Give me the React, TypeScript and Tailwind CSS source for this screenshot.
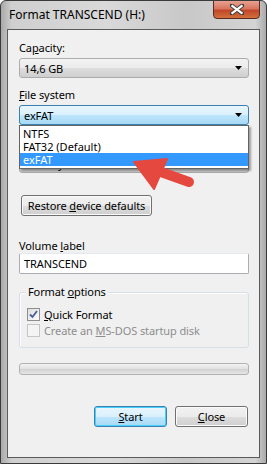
import { ReactNode } from "react";

const font = { fontFamily: '"Segoe UI", "Noto Sans", sans-serif' };
const txt = "text-[11px] leading-[15px] tracking-[-0.1px]";

function Combo(props: { children: ReactNode; focused?: boolean }) {
  return (
    <div
      className={`h-[20px] w-full rounded-[3px] border flex items-center pl-[4px] pr-[6px] ${
        props.focused
          ? "border-[#3c7fb1] bg-[linear-gradient(#eaf6fd_0%,#d9f0fc_50%,#bee6fd_51%,#a7d9f5_100%)]"
          : "border-[#acacac] bg-[linear-gradient(#f2f2f2_0%,#ebebeb_50%,#dddddd_51%,#cfcfcf_100%)]"
      }`}
    >
      <span className={`flex-1 ${txt}`}>{props.children}</span>
      <svg width="7" height="4" viewBox="0 0 7 4">
        <path d="M0 0H7L3.5 4Z" fill="#000" />
      </svg>
    </div>
  );
}

function Btn(props: { children: ReactNode; primary?: boolean; className?: string }) {
  return (
    <div
      className={`h-[21px] rounded-[3px] border flex items-center justify-center ${
        props.primary
          ? "border-[#3c7fb1] shadow-[inset_0_0_0_1px_#48d0fa] bg-[linear-gradient(#eaf6fd_0%,#d9f0fc_50%,#bee6fd_51%,#a7d9f5_100%)]"
          : "border-[#707070] shadow-[inset_0_0_0_1px_#fbfbfb] bg-[linear-gradient(#f2f2f2_0%,#ebebeb_50%,#dddddd_51%,#cfcfcf_100%)]"
      } ${props.className ?? ""}`}
    >
      <span className={txt}>{props.children}</span>
    </div>
  );
}

function Check(props: { checked?: boolean; disabled?: boolean; children: ReactNode }) {
  return (
    <div className="flex items-center gap-[4px] h-[16px]">
      <div
        className={`w-[13px] h-[13px] border flex items-center justify-center ${
          props.disabled
            ? "border-[#c5c5c5] bg-[#f4f4f4]"
            : "border-[#8e8f8f] bg-[linear-gradient(135deg,#dcdcdc,#fdfdfd)]"
        }`}
      >
        {props.checked && (
          <svg width="9" height="9" viewBox="0 0 9 9">
            <path d="M1 4.5L3.5 7L8 1" fill="none" stroke="#4a5f97" strokeWidth="1.8" />
          </svg>
        )}
      </div>
      <span className={`${txt} ${props.disabled ? "text-[#8d8d8d]" : "text-black"}`}>
        {props.children}
      </span>
    </div>
  );
}

export default function App() {
  return (
    <div
      style={font}
      className="relative w-[267px] h-[464px] flex flex-col overflow-hidden rounded-t-[6px] border border-[#3a3a3a] bg-[linear-gradient(90deg,#a9a9a9_0%,#cfcfcf_4%,#d9d9d9_40%,#c8c8c8_70%,#d4d4d4_96%,#a9a9a9_100%)] text-black"
    >
      {/* title bar */}
      <div className="h-[28px] shrink-0 flex items-start pl-[8px] pt-[6px] relative">
        <span className="text-[12px] leading-[15px] text-black">Format TRANSCEND (H:)</span>
        <div className="absolute right-[6px] top-[-1px] w-[47px] h-[19px] rounded-b-[4px] border border-[#5a2a24] bg-[linear-gradient(#e7a291_0%,#d9765e_45%,#c2452a_55%,#d2703b_100%)] flex items-center justify-center">
          <svg width="14" height="11" viewBox="0 0 14 11">
            <path d="M1 1L13 10M13 1L1 10" stroke="#3e3e3e" strokeWidth="4" strokeLinecap="round" />
            <path d="M1.5 1.3L12.5 9.7M12.5 1.3L1.5 9.7" stroke="#fff" strokeWidth="2.2" />
          </svg>
        </div>
      </div>

      {/* client area */}
      <div className="mx-[6px] h-[429px] shrink-0 border border-[#5a5a5a] bg-[#f0f0f0] pl-[11px] pr-[10px] flex flex-col relative">
        <div className={`${txt} mt-[10px]`}>
          Ca<u>p</u>acity:
        </div>
        <div className="mt-[3px]">
          <Combo>14,6 GB</Combo>
        </div>
        <div className={`${txt} mt-[9px]`}>
          <u>F</u>ile system
        </div>
        <div className="mt-[3px]">
          <Combo focused>exFAT</Combo>
        </div>
        <div className={`${txt} mt-[10px]`}>
          <u>A</u>llocation unit size
        </div>
        <div className="mt-[3px]">
          <Combo>4096 bytes</Combo>
        </div>
        <div className="mt-[22px]">
          <Btn className="w-[131px] ml-[2px]">
            Restore <u>d</u>evice defaults
          </Btn>
        </div>
        <div className={`${txt} mt-[22px]`}>
          Volume <u>l</u>abel
        </div>
        <div className={`h-[21px] border border-[#abadb3] border-t-[#e3e9ef] bg-white flex items-center pl-[4px] rounded-[2px] ${txt}`}>
          TRANSCEND
        </div>
        <div className="mt-[18px] h-[56px] border border-[#d5dfe5] rounded-[3px] relative pt-[13px] pl-[7px] flex flex-col shadow-[inset_1px_1px_0_#fff]">
          <span className={`absolute left-[6px] top-[-9px] px-[2px] bg-[#f0f0f0] ${txt}`}>
            Format <u>o</u>ptions
          </span>
          <Check checked>
            <u>Q</u>uick Format
          </Check>
          <Check disabled>
            Create an <u>M</u>S-DOS startup disk
          </Check>
        </div>
        <div className="mt-[15px] h-[12px] rounded-[3px] border border-[#b2b2b2] bg-[linear-gradient(#f3f3f3_0%,#e2e2e2_45%,#d3d3d3_55%,#e6e6e6_100%)]" />
        <div className="mt-[31px] flex justify-end gap-[8px] pr-[1px]">
          <Btn primary className="w-[73px]">
            <u>S</u>tart
          </Btn>
          <Btn className="w-[73px]">
            <u>C</u>lose
          </Btn>
        </div>

        {/* open dropdown list */}
        <div className="absolute left-[11px] top-[95px] w-[230px] h-[44px] border border-[#646464] bg-white shadow-[2px_2px_2px_rgba(0,0,0,0.35)] flex flex-col pt-[1px]">
          <div className="h-[13px] pl-[3px] text-[11px] leading-[13px]">NTFS</div>
          <div className="h-[13px] pl-[3px] text-[11px] leading-[13px]">FAT32 (Default)</div>
          <div className="h-[13px] pl-[3px] text-[11px] leading-[13px] bg-[#3399ff] text-white">exFAT</div>
        </div>
      </div>

      {/* red arrow */}
      <svg className="absolute left-0 top-0" width="267" height="464" viewBox="0 0 267 464">
        <path d="M188 181L157 170" stroke="#e5483f" strokeWidth="10" strokeLinecap="round" />
        <path d="M133 161L166 158L153 188Z" fill="#e5483f" stroke="#e5483f" strokeWidth="2" strokeLinejoin="round" />
      </svg>
    </div>
  );
}
